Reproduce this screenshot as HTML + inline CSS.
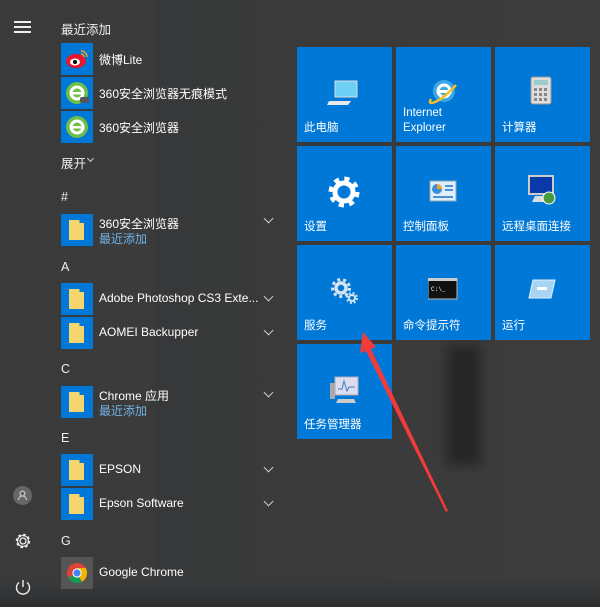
<!DOCTYPE html>
<html><head><meta charset="utf-8"><style>
*{margin:0;padding:0;box-sizing:border-box}
body{width:600px;height:607px;overflow:hidden;background:#3a3a3a;font-family:"Liberation Sans","Noto Sans CJK SC",sans-serif;color:#fff;position:relative}
.a{position:absolute}
.ic{position:absolute;left:61px;width:32px;height:32px;background:#0078d7}
.fold{position:absolute;left:8px;top:6px;width:15px;height:20px;background:#f7d56e;clip-path:polygon(0 0,70% 0,70% 15%,100% 15%,100% 100%,0 100%)}
.t{position:absolute;left:99px;font-size:12px;color:#fff;white-space:nowrap}
.sub{position:absolute;left:99px;font-size:12px;color:#6fb3ea}
.h{position:absolute;left:61px;font-size:12.5px;color:#eee}
.chev{position:absolute;left:265px;width:7px;height:7px;border-right:1.3px solid #ccc;border-bottom:1.3px solid #ccc;transform:rotate(45deg)}
.tile{position:absolute;width:95px;height:95px;background:#0078d7}
.tile span{position:absolute;left:7px;bottom:6px;font-size:11.5px;line-height:15px}
</style></head><body>
<div class="a" style="left:0;top:0;width:600px;height:607px;background:linear-gradient(90deg,#3a3a3a 0,#3b3b3b 150px,#363839 160px,#3a3a3a 300px,#3c3c3c 600px)"></div>
<div class="a" style="left:447px;top:345px;width:34px;height:120px;background:#262626;filter:blur(6px)"></div>
<div class="a" style="left:0;top:580px;width:600px;height:27px;background:linear-gradient(#383a3b,#2d2f31)"></div>
<div class="a" style="left:14px;top:21px;width:17px;height:2px;background:#eee;box-shadow:0 5px 0 #eee,0 10px 0 #eee"></div>
<div class="h" style="top:19px">最近添加</div>
<div class="ic" style="top:43px"><svg width="32" height="32"><ellipse cx="15" cy="18" rx="10" ry="7" fill="#e6162d"/><ellipse cx="14" cy="19" rx="5" ry="3.5" fill="#fff"/><circle cx="14" cy="19" r="2" fill="#000"/><path d="M20 8a6 6 0 0 1 6 6M20 11a3 3 0 0 1 3 3" stroke="#f5a623" stroke-width="1.5" fill="none"/></svg></div>
<div class="t" style="top:51px">微博Lite</div>
<div class="ic" style="top:77px"><svg width="32" height="32"><circle cx="16" cy="16" r="11" fill="#6cc04a"/><circle cx="16" cy="16" r="6" fill="none" stroke="#fff" stroke-width="3"/><rect x="10" y="15" width="12" height="2.5" fill="#fff"/><rect x="19" y="20" width="9" height="6" rx="2" fill="#555"/></svg></div>
<div class="t" style="top:85px">360安全浏览器无痕模式</div>
<div class="ic" style="top:111px"><svg width="32" height="32"><circle cx="16" cy="16" r="11" fill="#6cc04a"/><circle cx="16" cy="16" r="6" fill="none" stroke="#fff" stroke-width="3"/><rect x="10" y="15" width="12" height="2.5" fill="#fff"/></svg></div>
<div class="t" style="top:119px">360安全浏览器</div>
<div class="h" style="top:153px">展开</div>
<div class="a" style="left:88px;top:156px;width:5px;height:5px;border-right:1.2px solid #ccc;border-bottom:1.2px solid #ccc;transform:rotate(45deg)"></div>
<div class="h" style="top:190px">#</div>
<div class="ic" style="top:214px"><div class="fold"></div></div>
<div class="t" style="top:215px">360安全浏览器</div><div class="sub" style="top:230px">最近添加</div><div class="chev" style="top:215px"></div>
<div class="h" style="top:260px">A</div>
<div class="ic" style="top:283px"><div class="fold"></div></div>
<div class="t" style="top:291px">Adobe Photoshop CS3 Exte...</div><div class="chev" style="top:293px"></div>
<div class="ic" style="top:317px"><div class="fold"></div></div>
<div class="t" style="top:325px">AOMEI Backupper</div><div class="chev" style="top:327px"></div>
<div class="h" style="top:362px">C</div>
<div class="ic" style="top:386px"><div class="fold"></div></div>
<div class="t" style="top:387px">Chrome 应用</div><div class="sub" style="top:402px">最近添加</div><div class="chev" style="top:389px"></div>
<div class="h" style="top:431px">E</div>
<div class="ic" style="top:454px"><div class="fold"></div></div>
<div class="t" style="top:462px">EPSON</div><div class="chev" style="top:464px"></div>
<div class="ic" style="top:488px"><div class="fold"></div></div>
<div class="t" style="top:496px">Epson Software</div><div class="chev" style="top:498px"></div>
<div class="h" style="top:534px">G</div>
<div class="ic" style="top:557px;background:#555"><svg width="32" height="32"><circle cx="16" cy="16" r="10" fill="#db4437"/><path d="M16 16L7.3 21A10 10 0 0 0 21 24.7Z" fill="#0f9d58"/><path d="M16 16L21 24.7A10 10 0 0 0 24.7 11H16Z" fill="#f4b400"/><circle cx="16" cy="16" r="4.6" fill="#fff"/><circle cx="16" cy="16" r="3.6" fill="#4285f4"/></svg></div>
<div class="t" style="top:565px">Google Chrome</div>
<div class="a" style="left:13px;top:486px;width:19px;height:19px;border-radius:50%;background:#666"><svg width="19" height="19"><circle cx="9.5" cy="7.5" r="2.5" fill="none" stroke="#ddd"/><path d="M5.5 14a4 4 0 0 1 8 0" fill="none" stroke="#ddd"/></svg></div>
<svg class="a" style="left:14px;top:532px" width="18" height="18"><circle cx="9" cy="9" r="3" fill="none" stroke="#eee" stroke-width="1.3"/><circle cx="9" cy="9" r="6" fill="none" stroke="#eee" stroke-width="2.5" stroke-dasharray="2.4 2.3"/><circle cx="9" cy="9" r="5.5" fill="none" stroke="#eee" stroke-width="1"/></svg>
<svg class="a" style="left:14px;top:578px" width="18" height="18"><path d="M5 4.5a6.5 6.5 0 1 0 8 0" fill="none" stroke="#eee" stroke-width="1.4"/><path d="M9 2v7" stroke="#eee" stroke-width="1.4"/></svg>
<div class="tile" style="left:297px;top:47px"><svg class="a" style="left:30px;top:32px" width="36" height="30"><rect x="8" y="2" width="22" height="16" fill="#6fd0f5" stroke="#ddd"/><path d="M2 22h22l-3 4H0z" fill="#e8e8e8"/></svg><span>此电脑</span></div>
<div class="tile" style="left:396px;top:47px"><svg class="a" style="left:30px;top:26px" width="36" height="36"><circle cx="18" cy="18" r="11" fill="#3ba8e8"/><rect x="11" y="17" width="15" height="3" fill="#fff"/><circle cx="18" cy="18" r="6" fill="none" stroke="#fff" stroke-width="3"/><path d="M5 26C0 34 14 30 30 12" stroke="#f4c020" stroke-width="2.5" fill="none"/></svg><span>Internet<br>Explorer</span></div>
<div class="tile" style="left:495px;top:47px"><svg class="a" style="left:35px;top:29px" width="24" height="30"><rect x="1" y="1" width="20" height="27" rx="2" fill="#ddd" stroke="#999"/><rect x="4" y="4" width="14" height="5" fill="#9cc"/><g fill="#888"><rect x="4" y="12" width="3" height="3"/><rect x="9" y="12" width="3" height="3"/><rect x="14" y="12" width="3" height="3"/><rect x="4" y="17" width="3" height="3"/><rect x="9" y="17" width="3" height="3"/><rect x="14" y="17" width="3" height="3"/><rect x="4" y="22" width="3" height="3"/><rect x="9" y="22" width="3" height="3"/><rect x="14" y="22" width="3" height="3"/></g></svg><span>计算器</span></div>
<div class="tile" style="left:297px;top:146px"><svg class="a" style="left:31px;top:30px" width="32" height="32"><circle cx="16" cy="16" r="9" fill="none" stroke="#fff" stroke-width="5"/><circle cx="16" cy="16" r="13" fill="none" stroke="#fff" stroke-width="5" stroke-dasharray="5 5.2"/></svg><span>设置</span></div>
<div class="tile" style="left:396px;top:146px"><svg class="a" style="left:33px;top:34px" width="28" height="22"><rect x="1" y="1" width="26" height="20" fill="#dfeefa" stroke="#8ab"/><circle cx="8" cy="9" r="5" fill="#3a8fdc"/><path d="M8 9V4a5 5 0 0 1 5 5z" fill="#f4a020"/><rect x="16" y="5" width="8" height="2" fill="#4a90d0"/><rect x="16" y="9" width="8" height="2" fill="#4a90d0"/><rect x="4" y="16" width="20" height="2" fill="#4a90d0"/></svg><span>控制面板</span></div>
<div class="tile" style="left:495px;top:146px"><svg class="a" style="left:32px;top:28px" width="32" height="32"><rect x="2" y="2" width="24" height="18" fill="#0a3aa8" stroke="#ccc" stroke-width="2"/><path d="M8 22h12l3 6H5z" fill="#ddd"/><circle cx="22" cy="24" r="6" fill="#4a9a40" stroke="#fff"/></svg><span>远程桌面连接</span></div>
<div class="tile" style="left:297px;top:245px"><svg class="a" style="left:32px;top:31px" width="30" height="30"><circle cx="12" cy="12" r="5" fill="none" stroke="#d8e4ef" stroke-width="3.5"/><circle cx="12" cy="12" r="8.5" fill="none" stroke="#d8e4ef" stroke-width="3" stroke-dasharray="3 3"/><circle cx="23" cy="22" r="3" fill="none" stroke="#d8e4ef" stroke-width="2"/><circle cx="23" cy="22" r="5" fill="none" stroke="#d8e4ef" stroke-width="2" stroke-dasharray="2 2"/></svg><span>服务</span></div>
<div class="tile" style="left:396px;top:245px"><svg class="a" style="left:32px;top:33px" width="30" height="22"><rect x="0" y="0" width="29" height="21" fill="#111" stroke="#bbb"/><rect x="0" y="0" width="29" height="3" fill="#ccc"/><text x="3" y="13" font-size="6" fill="#fff" font-family="Liberation Mono,monospace">C:\_</text></svg><span>命令提示符</span></div>
<div class="tile" style="left:495px;top:245px"><svg class="a" style="left:32px;top:33px" width="30" height="22"><path d="M6 2h22l-4 18H2z" fill="#a8d4f4" stroke="#e0f0ff"/><rect x="10" y="9" width="10" height="3" fill="#fff"/></svg><span>运行</span></div>
<div class="tile" style="left:297px;top:344px"><svg class="a" style="left:33px;top:31px" width="30" height="30"><rect x="5" y="2" width="23" height="18" fill="#dde" stroke="#aab"/><path d="M8 14l4 0 2-8 3 10 2-4 6 0" stroke="#3a80c8" fill="none"/><rect x="0" y="8" width="5" height="16" fill="#aaa"/><path d="M8 24h16l2 4H6z" fill="#ccc"/></svg><span>任务管理器</span></div>
<svg class="a" style="left:0;top:0" width="600" height="607"><path d="M363 332L376 347L371 349L448 511L446 512L366 351L360 353Z" fill="#f23b3b"/></svg>
</body></html>
